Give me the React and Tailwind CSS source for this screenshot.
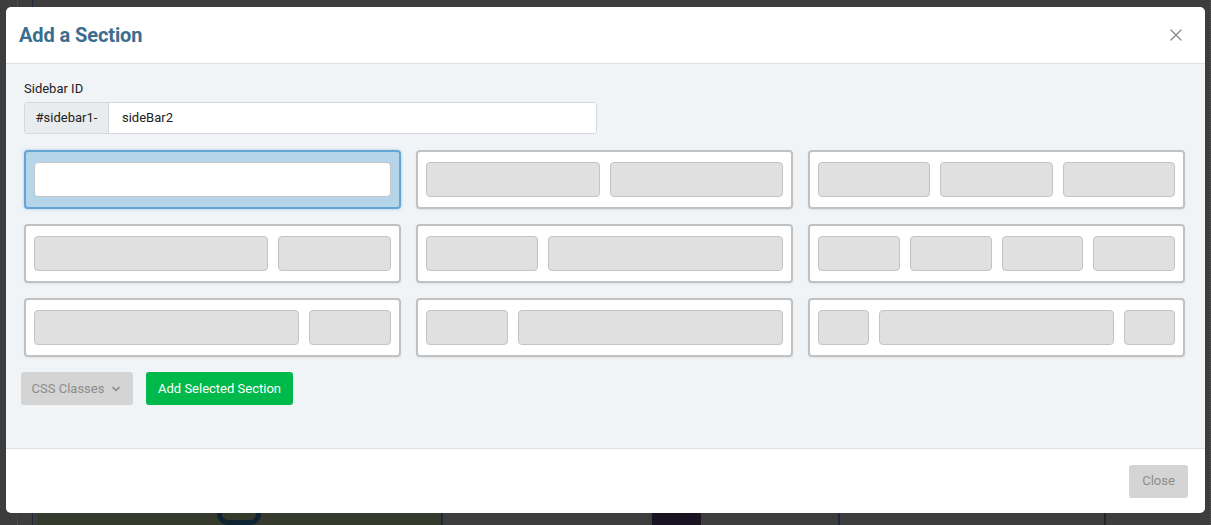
import React from 'react';
import { X, ChevronDown } from 'lucide-react';

const layouts = [
  { cols: 'grid-cols-1', count: 1, selected: true },
  { cols: 'grid-cols-2', count: 2 },
  { cols: 'grid-cols-3', count: 3 },
  { cols: 'grid-cols-[234fr_113fr]', count: 2 },
  { cols: 'grid-cols-[112fr_235fr]', count: 2 },
  { cols: 'grid-cols-4', count: 4 },
  { cols: 'grid-cols-[265fr_82fr]', count: 2 },
  { cols: 'grid-cols-[82fr_265fr]', count: 2 },
  { cols: 'grid-cols-[51fr_235fr_51fr]', count: 3 },
];

const LayoutCard = ({ cols, count, selected }) => (
  <div
    className={
      selected
        ? 'h-[59px] rounded-[4px] border-2 border-[#64a5d6] bg-[#b5d6ea] px-2 py-[10px] shadow-[0_0_3px_rgba(100,165,214,0.6)]'
        : 'h-[59px] rounded-[4px] border-2 border-[#c1c1c1] bg-white px-2 py-[10px] shadow-[0_1px_2px_rgba(0,0,0,0.08)]'
    }
  >
    <div className={`grid ${cols} gap-[10px] h-full`}>
      {Array.from({ length: count }).map((_, i) => (
        <div
          key={i}
          className={
            selected
              ? 'rounded-[4px] border border-[#c4c4c4] bg-white'
              : 'rounded-[4px] border border-[#c4c4c4] bg-[#e0e0e0]'
          }
        />
      ))}
    </div>
  </div>
);

const App = () => {
  return (
    <div className="relative w-[1211px] h-[525px] overflow-hidden bg-[#3d3d3d] font-['Roboto',sans-serif]">
      {/* page behind the overlay */}
      <div className="absolute inset-0 flex">
        <div className="w-[18px] border-r border-dotted border-[#555]" />
        <div className="w-[15px] border-r border-[#1e2a3a]" />
        <div className="flex-1" />
        <div className="w-[35px] border-r border-dotted border-[#555]" />
      </div>
      <div className="absolute left-[37px] top-[513px] w-[406px] h-[12px] bg-[#353a2c] border-r-2 border-[#1e2a3a] flex justify-center">
        <div className="w-[44px] h-[22px] -mt-[10px] rounded-full border-[5px] border-[#0f2433]" />
      </div>
      <div className="absolute left-[652px] top-[513px] w-[49px] h-[12px] bg-[#1a1322]" />
      <div className="absolute left-[838px] top-[513px] w-[2px] h-[12px] bg-[#1e2a3a]" />
      <div className="absolute left-[1104px] top-[513px] w-[2px] h-[12px] bg-[#262626]" />

      {/* modal */}
      <div className="absolute left-[6px] top-[7px] w-[1199px] h-[506px] flex flex-col rounded-[5px] bg-white overflow-hidden">
        <div className="h-[57px] shrink-0 flex items-center justify-between pl-[13px] pr-[19px] border-b border-[#dcdfe3]">
          <h2 className="text-[20px] font-bold text-[#3a6d8e] tracking-[-0.1px]">Add a Section</h2>
          <X className="w-[20px] h-[20px] text-[#8c8c8c]" strokeWidth={1.6} />
        </div>

        <div className="flex-1 bg-[#f0f4f7] pl-[18px] pr-[20px] pt-[17px]">
          <div className="text-[13px] text-[#222] leading-[16px] mb-[5px]">Sidebar ID</div>
          <div className="flex w-[573px] h-[32px] rounded-[3px] border border-[#d4d8dd] overflow-hidden text-[13px] text-[#222]">
            <div className="w-[84px] shrink-0 flex items-center justify-center bg-[#e9ecef] border-r border-[#d4d8dd]">
              #sidebar1-
            </div>
            <div className="flex-1 flex items-center bg-white pl-[13px]">sideBar2</div>
          </div>

          <div className="grid grid-cols-3 gap-x-[15px] gap-y-[15px] mt-[16px]">
            {layouts.map((l, i) => (
              <LayoutCard key={i} {...l} />
            ))}
          </div>

          <div className="flex items-center gap-[13px] mt-[15px] -ml-[3px]">
            <button className="h-[33px] w-[112px] flex items-center justify-center gap-[6px] rounded-[3px] bg-[#d4d4d4] text-[13px] text-[#8c8c8c]">
              CSS Classes
              <ChevronDown className="w-[12px] h-[12px]" strokeWidth={3.5} />
            </button>
            <button className="h-[33px] w-[147px] flex items-center justify-center rounded-[3px] bg-[#00b94b] text-[13px] text-white">
              Add Selected Section
            </button>
          </div>
        </div>

        <div className="h-[65px] shrink-0 flex items-center justify-end pr-[17px] border-t border-[#dcdfe3]">
          <button className="h-[33px] w-[59px] rounded-[3px] bg-[#d4d4d4] text-[13px] text-[#8c8c8c]">Close</button>
        </div>
      </div>
    </div>
  );
};

export default App;
